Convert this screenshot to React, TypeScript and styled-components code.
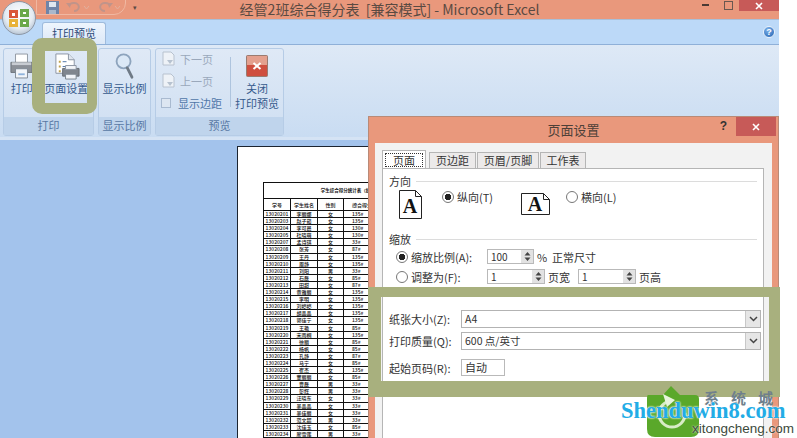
import React from 'react';
import styled, { createGlobalStyle } from 'styled-components';

const Global = createGlobalStyle`
  html, body { margin: 0; padding: 0; background: #fff; overflow: hidden; }
  body { font-family: "Noto Sans CJK SC", "Liberation Sans", sans-serif; }
  * { box-sizing: border-box; }
`;

const ROWS: [string, string, string, string][] = [
  ['13020201', '李丽娜', '女', '135#'], ['13020203', '赵子茹', '女', '135#'], ['13020204', '李可晨', '女', '130#'],
  ['13020205', '杜晓萌', '女', '130#'], ['13020207', '孟诗琪', '女', '33#'], ['13020208', '张芳', '女', '87#'],
  ['13020209', '王丹', '女', '135#'], ['13020210', '周静', '女', '135#'], ['13020211', '刘阳', '男', '33#'],
  ['13020212', '石磊', '女', '85#'], ['13020213', '田甜', '女', '87#'], ['13020214', '黄雅丽', '女', '135#'],
  ['13020215', '李明', '女', '135#'], ['13020216', '刘婷婷', '女', '135#'], ['13020217', '胡晶晶', '女', '135#'],
  ['13020218', '郭佳宁', '女', '135#'], ['13020219', '王艳', '女', '85#'], ['13020220', '宋雨桐', '女', '135#'],
  ['13020221', '徐丽', '女', '85#'], ['13020222', '杨帆', '女', '85#'], ['13020223', '孔静', '女', '87#'],
  ['13020224', '马宁', '女', '85#'], ['13020225', '崔杰', '女', '135#'], ['13020226', '董丽丽', '女', '85#'],
  ['13020227', '曹磊', '男', '33#'], ['13020228', '彭辉', '男', '33#'], ['13020229', '汪晓东', '女', '33#'],
  ['13020230', '吴晶晶', '女', '33#'], ['13020231', '吴佳丽', '女', '33#'], ['13020232', '范文超', '男', '33#'],
  ['13020233', '沈佳玉', '女', '85#'], ['13020234', '廖雪莲', '男', '33#'],
];

const Screen = styled.div`
  position: relative;
  width: 797px;
  height: 438px;
  overflow: hidden;
  background: #fff;
`;

const Window = styled.div`
  width: 779px;
  height: 438px;
  display: flex;
  flex-direction: column;
  background: #a3c3ec;
`;

const TitleBar = styled.div`
  position: relative;
  flex: 0 0 19px;
  background: #e9987c;
  display: flex;
  justify-content: center;
  align-items: center;
  color: #5a4a42;
  font-size: 14px;
  line-height: 19px;
  white-space: nowrap;
`;

const Orb = styled.div`
  position: absolute;
  left: 2px;
  top: 1px;
  width: 34px;
  height: 34px;
  border-radius: 50%;
  background: radial-gradient(circle at 50% 40%, #fff 0%, #e4ebf2 55%, #8fa2b8 100%);
  border: 1px solid #8d97a5;
  display: flex;
  align-items: center;
  justify-content: center;
  z-index: 2;
`;

const QuickBar = styled.div`
  position: absolute;
  left: 36px;
  top: -8px;
  width: 90px;
  height: 23px;
  border: 1px solid #f0b8a2;
  border-radius: 0 0 12px 0;
  display: flex;
  align-items: center;
  padding: 7px 0 0 9px;
  gap: 7px;
`;

const QuickMore = styled.div`
  position: absolute;
  left: 133px;
  top: 2px;
  color: #5d4a44;
  font-size: 7px;
  line-height: 10px;
`;

const WinButtons = styled.div`
  position: absolute;
  right: 0;
  top: 0;
  display: flex;
  align-items: flex-start;
`;

const WinGlyph = styled.div`
  width: 22px;
  height: 11px;
  display: flex;
  justify-content: center;
  align-items: center;
`;

const CloseBtn = styled.div<{ $w: number; $h: number }>`
  width: ${(p) => p.$w}px;
  height: ${(p) => p.$h}px;
  background: #c75a58;
  display: flex;
  align-items: center;
  justify-content: center;
`;

const TabStrip = styled.div`
  flex: 0 0 24px;
  background: #bcd9f8;
  border-top: 1px solid #a9bfd8;
  padding: 2px 0 0 42px;
  display: flex;
  align-items: flex-end;
  justify-content: space-between;
`;

const RibbonTab = styled.div`
  width: 64px;
  height: 22px;
  background: linear-gradient(#eef5fd, #dce8f7);
  border: 1px solid #9fbbdc;
  border-bottom: none;
  border-radius: 3px 3px 0 0;
  color: #2c4a78;
  font-size: 11px;
  line-height: 21px;
  text-align: center;
`;

const Help = styled.div`
  width: 12px;
  height: 12px;
  margin: 0 4px 6px 0;
  border-radius: 50%;
  background: radial-gradient(circle at 40% 30%, #7fb3ec, #1f5fae);
  border: 1px solid #e8f1fb;
  color: #fff;
  font-family: "Liberation Sans", sans-serif;
  font-weight: bold;
  font-size: 9px;
  line-height: 10px;
  text-align: center;
`;

const Ribbon = styled.div`
  flex: 0 0 92px;
  display: flex;
  gap: 4px;
  padding: 3px 0 1px 3px;
  background: linear-gradient(#dee9f6, #c9dcf2);
  border-top: 1px solid #8fb0d8;
`;

const Group = styled.div<{ $w: number }>`
  width: ${(p) => p.$w}px;
  height: 88px;
  display: flex;
  flex-direction: column;
  border: 1px solid #b6cce6;
  border-radius: 3px;
  background: linear-gradient(#dfe9f6, #cfdff2);
`;

const GroupBody = styled.div`
  flex: 1;
  display: flex;
  min-height: 0;
`;

const GroupLabel = styled.div`
  flex: 0 0 18px;
  background: #bfd4ec;
  color: #5878a4;
  font-size: 11px;
  line-height: 17px;
  text-align: center;
`;

const LargeBtn = styled.div<{ $w: number }>`
  width: ${(p) => p.$w}px;
  display: flex;
  flex-direction: column;
  align-items: center;
  padding-top: 2px;
`;

const IconSlot = styled.div`
  height: 30px;
  display: flex;
  align-items: center;
  justify-content: center;
`;

const BtnText = styled.div`
  color: #355a8c;
  font-size: 11px;
  line-height: 15px;
  text-align: center;
  white-space: nowrap;
`;

const SmallCol = styled.div`
  width: 74px;
  display: flex;
  flex-direction: column;
  padding: 1px 0 0 5px;
  gap: 5px;
`;

const SmallBtn = styled.div`
  height: 17px;
  display: flex;
  align-items: center;
  gap: 4px;
  color: #9aa8bb;
  font-size: 11px;
  white-space: nowrap;
`;

const SmallCheck = styled(SmallBtn)`
  color: #4f76a8;
`;

const GhostBox = styled.div`
  width: 10px;
  height: 10px;
  margin-right: 3px;
  border: 1px solid #a9bad0;
  background: #dde6f1;
`;

const Sep = styled.div`
  width: 1px;
  height: 50px;
  margin-top: 8px;
  background: #aec4de;
`;

const Workspace = styled.div`
  flex: 1;
  min-height: 0;
  overflow: hidden;
  padding: 6px 0 0 237px;
  border-top: 3px solid #d5e3f4;
`;

const Sheet = styled.div`
  width: 320px;
  height: 400px;
  background: #fff;
  border-top: 1px solid #1c2430;
  border-left: 1px solid #1c2430;
  padding: 35px 0 0 25px;
`;

const PrintTable = styled.div`
  width: 150px;
  border-top: 1px solid #111;
  border-left: 1px solid #111;
  color: #111;
  font-size: 5px;
  font-weight: 500;
`;

const PrintTitle = styled.div`
  height: 16px;
  line-height: 15px;
  text-align: center;
  font-weight: bold;
  font-size: 4.5px;
  border-bottom: 1px solid #111;
  white-space: nowrap;
  padding-left: 30px;
`;

const PrintRow = styled.div<{ $h: number }>`
  display: grid;
  grid-template-columns: 27px 27px 26px 70px;
  height: ${(p) => p.$h}px;
  line-height: ${(p) => p.$h - 1}px;
  border-bottom: 1px solid #111;
  white-space: nowrap;
  overflow: hidden;
`;

const PrintCell = styled.div`
  text-align: center;
  border-right: 1px solid #111;
  overflow: hidden;
  &:last-child { text-align: left; padding-left: 8px; }
`;

const Dialog = styled.div`
  position: absolute;
  left: 368px;
  top: 116px;
  width: 411px;
  height: 322px;
  background: #e9987c;
  border: 1px solid #b98a77;
  border-bottom: none;
  display: flex;
  flex-direction: column;
`;

const DialogTitle = styled.div`
  position: relative;
  flex: 0 0 26px;
  color: #4d4038;
  font-size: 13px;
  line-height: 25px;
  text-align: center;
`;

const DialogControls = styled.div`
  position: absolute;
  right: 2px;
  top: 0;
  display: flex;
  align-items: flex-start;
  gap: 9px;
`;

const Question = styled.div`
  color: #333;
  font-family: "Liberation Sans", sans-serif;
  font-weight: bold;
  font-size: 12px;
  line-height: 18px;
`;

const DialogBody = styled.div`
  flex: 1;
  min-height: 0;
  overflow: hidden;
  margin: 0 6px;
  background: #f2f2f2;
  padding: 7px 8px 0 7px;
`;

const TabRow = styled.div`
  display: flex;
  height: 18px;
  align-items: flex-end;
  gap: 1px;
`;

const DlgTab = styled.div<{ $w: number; $active?: boolean }>`
  width: ${(p) => p.$w}px;
  height: ${(p) => (p.$active ? 18 : 16)}px;
  background: ${(p) => (p.$active ? '#fff' : '#eceaea')};
  border: 1px solid #b5b5b5;
  border-bottom: none;
  color: #333;
  font-size: 11px;
  line-height: 15px;
  text-align: center;
  margin-right: ${(p) => (p.$active ? 2 : 0)}px;
`;

const Focus = styled.span`
  display: block;
  margin: 2px 2px 0;
  line-height: 12px;
  border: 1px dotted #333;
`;

const Panel = styled.div`
  height: 300px;
  background: #fff;
  border: 1px solid #b5b5b5;
  padding: 6px 6px 0 6px;
  color: #333;
  font-size: 11px;
`;

const Section = styled.div`
  display: flex;
  align-items: center;
  gap: 5px;
  height: 13px;
  line-height: 13px;
`;

const SectionRule = styled.div`
  flex: 1;
  height: 1px;
  background: #dcdcdc;
`;

const Orientation = styled.div`
  display: flex;
  align-items: flex-start;
  height: 45px;
  padding: 2px 0 0 10px;
`;

const PageIcon = styled.div<{ $w: number; $mt: number; $gap: number }>`
  width: ${(p) => p.$w}px;
  margin: ${(p) => p.$mt}px ${(p) => p.$gap}px 0 0;
`;

const Radio = styled.span<{ $on?: boolean }>`
  display: inline-block;
  flex: none;
  width: 12px;
  height: 12px;
  border-radius: 50%;
  border: 1px solid #777;
  background: ${(p) => (p.$on ? 'radial-gradient(circle, #222 0 3px, #fff 3.5px)' : '#fff')};
`;

const RadioLabel = styled.label<{ $w?: number }>`
  display: flex;
  align-items: center;
  gap: 3px;
  height: 14px;
  line-height: 14px;
  width: ${(p) => (p.$w ? `${p.$w}px` : 'auto')};
  white-space: nowrap;
`;

const ScaleList = styled.div`
  display: flex;
  flex-direction: column;
  gap: 5px;
  margin-top: 3px;
`;

const ScaleRow = styled.div`
  display: flex;
  align-items: center;
  height: 15px;
  padding-left: 7px;
  gap: 3px;
  white-space: nowrap;
`;

const Spin = styled.div<{ $w: number; $ml?: number }>`
  width: ${(p) => p.$w}px;
  height: 15px;
  margin-left: ${(p) => p.$ml ?? 0}px;
  border: 1px solid #b9b9b9;
  display: flex;
  justify-content: space-between;
  line-height: 13px;
  padding-left: 3px;
  font-size: 10px;
  background: #fff;
`;

const SpinArrows = styled.div`
  width: 12px;
  background: #e2e2e2;
  display: flex;
  align-items: center;
  justify-content: center;
`;

const PaperGrid = styled.div`
  display: grid;
  grid-template-columns: 72px 300px;
  grid-template-rows: 18px 18px 17px;
  row-gap: 4px;
  align-items: center;
  margin-top: 26px;
`;

const Select = styled.div`
  height: 18px;
  border: 1px solid #b3b3b3;
  display: flex;
  justify-content: space-between;
  align-items: stretch;
  padding-left: 3px;
  line-height: 16px;
  font-size: 10.5px;
`;

const SelectArrow = styled.div`
  width: 15px;
  background: #e6e6e6;
  border-left: 1px solid #c8c8c8;
  display: flex;
  align-items: center;
  justify-content: center;
`;

const StartPage = styled.div`
  width: 44px;
  height: 17px;
  margin-top: 10px;
  border: 1px solid #b9b9b9;
  padding-left: 3px;
  line-height: 15px;
`;

const StartLabel = styled.div`
  margin-top: 10px;
`;

const Mark = styled.div<{ $x: number; $y: number; $w: number; $h: number; $b: number; $r: number }>`
  position: absolute;
  left: ${(p) => p.$x}px;
  top: ${(p) => p.$y}px;
  width: ${(p) => p.$w}px;
  height: ${(p) => p.$h}px;
  border: ${(p) => p.$b}px solid #a8b07e;
  border-radius: ${(p) => p.$r}px;
  z-index: 5;
`;

const MarkLeft = styled(Mark)`
  border-right-width: 10px;
  border-bottom-width: 11px;
`;

const MarkBand = styled(Mark)`
  border-width: 10px 11px 16px 13px;
`;

const Badge = styled.div`
  position: absolute;
  left: 643px;
  top: 385px;
  z-index: 6;
`;

const BrandCn = styled.div`
  position: absolute;
  left: 704px;
  top: 389px;
  z-index: 6;
  color: #6f7f8c;
  font-size: 15px;
  font-weight: bold;
  letter-spacing: 12px;
  line-height: 18px;
`;

const BrandMain = styled.div`
  position: absolute;
  left: 621px;
  top: 397px;
  z-index: 7;
  color: #22ace6;
  font-family: "Liberation Serif", serif;
  font-weight: bold;
  font-size: 22.5px;
  line-height: 28px;
  text-shadow: 0 0 2px #fff, 0 0 2px #fff;
  white-space: nowrap;
`;

const BrandSub = styled.div`
  position: absolute;
  left: 692px;
  top: 421px;
  z-index: 7;
  color: #3c4a3c;
  font-family: "Liberation Sans", sans-serif;
  font-size: 13.5px;
  line-height: 16px;
  text-shadow: 0 0 2px #fff;
  white-space: nowrap;
`;

const OfficeIcon = () => (
  <svg width="24" height="24" viewBox="0 0 24 24">
    <path d="M2 4h9v8H2z" fill="#d9583a" />
    <path d="M13 3h9v8h-9z" fill="#6aa84a" />
    <path d="M2 13h9v8H2z" fill="#e8b23a" />
    <path d="M13 13h9v8h-9z" fill="#6aa84a" />
    <path d="M5 7h3v3H5zM16 6h3v2h-3zM5 16h3v2H5zM16 16h3v2h-3z" fill="#fff" />
  </svg>
);

const Floppy = () => (
  <svg width="13" height="13" viewBox="0 0 13 13">
    <path d="M0 0h13v13H0z" fill="#6f84a8" />
    <path d="M3 1h7v5H3z" fill="#dfe6f0" />
    <path d="M3 9h7v4H3z" fill="#aab8cc" />
  </svg>
);

const Arrow = ({ flip }: { flip?: boolean }) => (
  <svg width="24" height="12" viewBox="0 0 24 12">
    <g transform={flip ? 'translate(16 0) scale(-1 1)' : undefined}>
      <path d="M3 5a5 4 0 1 1 5 5" fill="none" stroke="#c0948a" strokeWidth="2" />
      <path d="M0 2l5 0-1 5z" fill="#c0948a" />
    </g>
    <path d="M18 5l2.500 3 2.500-3" fill="none" stroke="#e2b09e" strokeWidth="1" />
  </svg>
);

const CloseX = () => (
  <svg width="8" height="8" viewBox="0 0 8 8">
    <path d="M1 1l6 6M7 1l-6 6" stroke="#fff" strokeWidth="1.600" />
  </svg>
);

const PrinterIcon = () => (
  <svg width="23" height="26" viewBox="0 0 25 28">
    <path d="M6 1h13v10H6z" fill="#fff" stroke="#8c949e" />
    <path d="M1 10h23v11H1z" fill="#8b9097" stroke="#6a7078" />
    <path d="M2 10h21v3H2z" fill="#c8ccd2" />
    <path d="M6 17h13v10H6z" fill="#f3f6fa" stroke="#7b8590" />
    <path d="M9 22h7v2H9z" fill="#8fb3dc" />
  </svg>
);

const PageSetupIcon = () => (
  <svg width="27" height="27" viewBox="0 0 28 28">
    <path d="M3 1h13l6 6v14H3z" fill="#fff" stroke="#8a94a2" />
    <path d="M16 1v6h6" fill="#dfe5ee" stroke="#8a94a2" />
    <path d="M6 8h2v2H6zM6 13h2v2H6zM6 18h2v2H6z" fill="#c0a24c" />
    <path d="M10 9h4M10 14h3M10 19h2" stroke="#4f73a4" strokeWidth="1" />
    <path d="M10 16h17v8H10z" fill="#80868e" stroke="#676d75" />
    <path d="M13 13h11v4H13z" fill="#f4f6f9" stroke="#8a94a2" />
    <path d="M13 22h11v5H13z" fill="#f1f4f8" stroke="#7b8590" />
  </svg>
);

const Magnifier = () => (
  <svg width="19" height="28" viewBox="0 0 20 30">
    <circle cx="9" cy="10" r="7.500" fill="#dbe8f6" stroke="#8ea4bd" strokeWidth="2" />
    <path d="M13 17l5 10" stroke="#6f7a86" strokeWidth="3" strokeLinecap="round" />
  </svg>
);

const GhostPage = () => (
  <svg width="15" height="15" viewBox="0 0 15 15">
    <path d="M2 1h8l3 3v10H2z" fill="#eef2f7" stroke="#b8c2cf" />
    <path d="M6 9h6l-3 4z" fill="#b7c2d0" />
  </svg>
);

const CloseIcon = () => (
  <svg width="22" height="22" viewBox="0 0 22 22">
    <rect x="0.500" y="0.500" width="21" height="21" rx="1" fill="#cf4f3f" stroke="#9a7b70" />
    <rect x="1" y="1" width="20" height="9" fill="#e4a08e" />
    <path d="M7.500 8l7 6M14.500 8l-7 6" stroke="#fff" strokeWidth="2" />
  </svg>
);

const Portrait = () => (
  <svg width="23" height="29" viewBox="0 0 23 29">
    <path d="M.5.500h16l6 6v22H.5z" fill="#fff" stroke="#222" />
    <path d="M16.500.500v6h6" fill="none" stroke="#222" />
    <text x="11" y="23" textAnchor="middle" fontFamily="Liberation Serif" fontSize="20" fontWeight="bold" fill="#111">A</text>
  </svg>
);

const Landscape = () => (
  <svg width="29" height="22" viewBox="0 0 29 22">
    <path d="M.5.500h22l6 6v15H.5z" fill="#fff" stroke="#222" />
    <path d="M22.500.500v6h6" fill="none" stroke="#222" />
    <text x="14" y="18" textAnchor="middle" fontFamily="Liberation Serif" fontSize="20" fontWeight="bold" fill="#111">A</text>
  </svg>
);

const Chevron = () => (
  <svg width="9" height="6" viewBox="0 0 9 6">
    <path d="M1 1l3.500 3.500L8 1" fill="none" stroke="#444" strokeWidth="1.500" />
  </svg>
);

const SpinGlyph = () => (
  <svg width="7" height="11" viewBox="0 0 7 11">
    <path d="M3.500 1L6.500 4.500H.5zM3.500 10L.5 6.500h6z" fill="#444" />
  </svg>
);

const BadgeIcon = () => (
  <svg width="58" height="53" viewBox="0 0 58 53">
    <path d="M5 10h15L28 1l9 9h15q4 0 4 4v30q0 8-8 8H12q-8 0-8-8V14q0-4 1-4z" fill="#5aa82a" />
    <circle cx="29" cy="29" r="13" fill="none" stroke="#d8ecc6" strokeWidth="3" strokeDasharray="60 20" />
    <path d="M20 9l12 6-8 7z" fill="#e8f4dc" />
  </svg>
);

const App = () => {
  return (
    <Screen>
      <Global />
      <Window>
        <TitleBar>
          <Orb>
            <OfficeIcon />
          </Orb>
          <QuickBar>
            <Floppy />
            <Arrow />
            <Arrow flip />
          </QuickBar>
          <QuickMore>▾</QuickMore>
          经管2班综合得分表&nbsp;&nbsp;[兼容模式] - Microsoft Excel
          <WinButtons>
            <WinGlyph>
              <svg width="8" height="3"><rect width="7" height="2" fill="#4a3a34" /></svg>
            </WinGlyph>
            <WinGlyph>
              <svg width="9" height="9"><rect x=".5" y=".5" width="8" height="8" fill="none" stroke="#6a5850" /></svg>
            </WinGlyph>
            <CloseBtn $w={40} $h={11}><CloseX /></CloseBtn>
          </WinButtons>
        </TitleBar>
        <TabStrip>
          <RibbonTab>打印预览</RibbonTab>
          <Help>?</Help>
        </TabStrip>
        <Ribbon>
          <Group $w={91}>
            <GroupBody>
              <LargeBtn $w={36}>
                <IconSlot><PrinterIcon /></IconSlot>
                <BtnText>打印</BtnText>
              </LargeBtn>
              <LargeBtn $w={54}>
                <IconSlot><PageSetupIcon /></IconSlot>
                <BtnText>页面设置</BtnText>
              </LargeBtn>
            </GroupBody>
            <GroupLabel>打印</GroupLabel>
          </Group>
          <Group $w={53}>
            <GroupBody>
              <LargeBtn $w={51}>
                <IconSlot><Magnifier /></IconSlot>
                <BtnText>显示比例</BtnText>
              </LargeBtn>
            </GroupBody>
            <GroupLabel>显示比例</GroupLabel>
          </Group>
          <Group $w={129}>
            <GroupBody>
              <SmallCol>
                <SmallBtn><GhostPage />下一页</SmallBtn>
                <SmallBtn><GhostPage />上一页</SmallBtn>
                <SmallCheck><GhostBox />显示边距</SmallCheck>
              </SmallCol>
              <Sep />
              <LargeBtn $w={52}>
                <IconSlot><CloseIcon /></IconSlot>
                <BtnText>关闭<br />打印预览</BtnText>
              </LargeBtn>
            </GroupBody>
            <GroupLabel>预览</GroupLabel>
          </Group>
        </Ribbon>
        <Workspace>
          <Sheet>
            <PrintTable>
              <PrintTitle>学生综合得分统计表（经管2班）</PrintTitle>
              <PrintRow $h={12}>
                <PrintCell>学号</PrintCell>
                <PrintCell>学生姓名</PrintCell>
                <PrintCell>性别</PrintCell>
                <PrintCell>综合得分</PrintCell>
              </PrintRow>
              {ROWS.map((r) => (
                <PrintRow key={r[0]} $h={7.1}>
                  {r.map((c, i) => (
                    <PrintCell key={i}>{c}</PrintCell>
                  ))}
                </PrintRow>
              ))}
            </PrintTable>
          </Sheet>
        </Workspace>
      </Window>

      <Dialog>
        <DialogTitle>
          页面设置
          <DialogControls>
            <Question>?</Question>
            <CloseBtn $w={40} $h={19}><CloseX /></CloseBtn>
          </DialogControls>
        </DialogTitle>
        <DialogBody>
          <TabRow>
            <DlgTab $w={44} $active><Focus>页面</Focus></DlgTab>
            <DlgTab $w={47}>页边距</DlgTab>
            <DlgTab $w={62}>页眉/页脚</DlgTab>
            <DlgTab $w={46}>工作表</DlgTab>
          </TabRow>
          <Panel>
            <Section>方向<SectionRule /></Section>
            <Orientation>
              <PageIcon $w={23} $mt={0} $gap={20}><Portrait /></PageIcon>
              <RadioLabel $w={79}><Radio $on />纵向(T)</RadioLabel>
              <PageIcon $w={29} $mt={3} $gap={16}><Landscape /></PageIcon>
              <RadioLabel><Radio />横向(L)</RadioLabel>
            </Orientation>
            <Section>缩放<SectionRule /></Section>
            <ScaleList>
              <ScaleRow>
                <RadioLabel $w={88}><Radio $on />缩放比例(A):</RadioLabel>
                <Spin $w={47}>100<SpinArrows><SpinGlyph /></SpinArrows></Spin>
                <span>%&nbsp;&nbsp;正常尺寸</span>
              </ScaleRow>
              <ScaleRow>
                <RadioLabel $w={88}><Radio />调整为(F):</RadioLabel>
                <Spin $w={58}>1<SpinArrows><SpinGlyph /></SpinArrows></Spin>
                <span>页宽</span>
                <Spin $w={58} $ml={5}>1<SpinArrows><SpinGlyph /></SpinArrows></Spin>
                <span>页高</span>
              </ScaleRow>
            </ScaleList>
            <PaperGrid>
              <div>纸张大小(Z):</div>
              <Select>A4<SelectArrow><Chevron /></SelectArrow></Select>
              <div>打印质量(Q):</div>
              <Select>600 点/英寸<SelectArrow><Chevron /></SelectArrow></Select>
              <StartLabel>起始页码(R):</StartLabel>
              <StartPage>自动</StartPage>
            </PaperGrid>
          </Panel>
        </DialogBody>
      </Dialog>

      <MarkLeft $x={32} $y={38} $w={65} $h={76} $b={13} $r={10} />
      <MarkBand $x={368} $y={287} $w={412} $h={110} $b={10} $r={0} />

      <Badge><BadgeIcon /></Badge>
      <BrandCn>系统城</BrandCn>
      <BrandMain>Shenduwin8.com</BrandMain>
      <BrandSub>xitongcheng.com</BrandSub>
    </Screen>
  );
};

export default App;
